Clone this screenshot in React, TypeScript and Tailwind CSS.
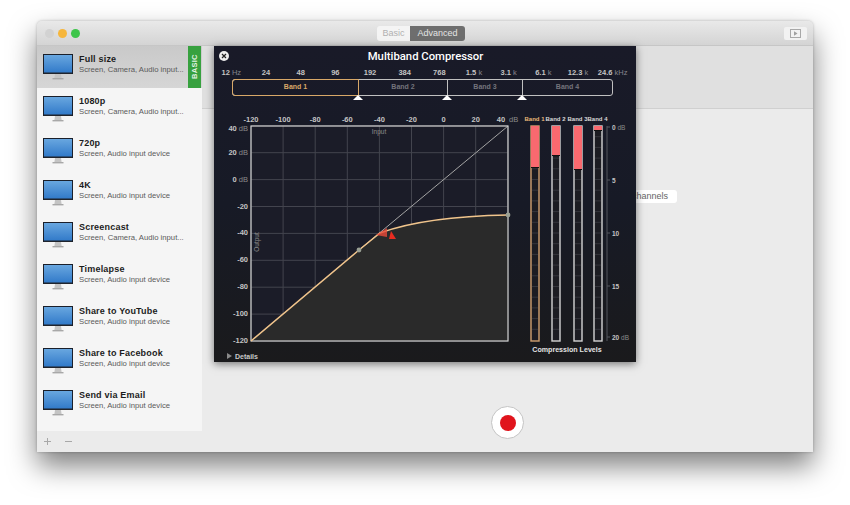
const PRESETS = [
  { name: 'Full size', sub: 'Screen, Camera, Audio input...', selected: true },
  { name: '1080p', sub: 'Screen, Camera, Audio input...' },
  { name: '720p', sub: 'Screen, Audio input device' },
  { name: '4K', sub: 'Screen, Audio input device' },
  { name: 'Screencast', sub: 'Screen, Camera, Audio input...' },
  { name: 'Timelapse', sub: 'Screen, Audio input device' },
  { name: 'Share to YouTube', sub: 'Screen, Audio input device' },
  { name: 'Share to Facebook', sub: 'Screen, Audio input device' },
  { name: 'Send via Email', sub: 'Screen, Audio input device' },
];

const FREQS = [
  ['12', 'Hz'], ['24', ''], ['48', ''], ['96', ''], ['192', ''], ['384', ''],
  ['768', ''], ['1.5', 'k'], ['3.1', 'k'], ['6.1', 'k'], ['12.3', 'k'], ['24.6', 'kHz'],
];

const BANDS = [
  { name: 'Band 1', width: 'w-[127px]', active: true, handle: true },
  { name: 'Band 2', width: 'w-[89px]', handle: true },
  { name: 'Band 3', width: 'w-[75px]', handle: true },
  { name: 'Band 4', width: 'w-[89px]' },
];

const X_TICKS = [-120, -100, -80, -60, -40, -20, 0, 20, 40];
const METERS = [
  { x: 531, top: 167, label: 'Band 1', color: '#d0a070', text: '#e8b878' },
  { x: 552, top: 155, label: 'Band 2', color: '#d4d4d4', text: '#d8d8d8' },
  { x: 574, top: 169, label: 'Band 3', color: '#d4d4d4', text: '#d8d8d8' },
  { x: 594, top: 130, label: 'Band 4', color: '#d4d4d4', text: '#d8d8d8' },
];
const METER_SCALE = [
  { y: 129, value: '0', unit: 'dB' },
  { y: 182, value: '5' },
  { y: 235, value: '10' },
  { y: 288, value: '15' },
  { y: 339, value: '20', unit: 'dB' },
];
const METER_MARKS = Array.from({ length: 19 }, (_, i) => 136.7 + i * 10.7);

function Monitor() {
  return (
    <svg width="31" height="26" viewBox="0 0 31 26" className="shrink-0">
      <defs>
        <linearGradient id="screen" x1="0" y1="0" x2="0" y2="1">
          <stop offset="0" stopColor="#6aa8e0" />
          <stop offset="1" stopColor="#2f78c8" />
        </linearGradient>
      </defs>
      <rect x="0.5" y="0.5" width="29" height="19" fill="url(#screen)" stroke="#1a1f2a" />
      <rect x="1" y="18.5" width="28" height="1.5" fill="#20242c" />
      <path d="M12 20h6l.6 4h-7.2z" fill="#c4c4c4" />
      <rect x="9.5" y="24" width="11" height="1.4" fill="#a8a8a8" />
    </svg>
  );
}

function ChartAndMeters() {
  const yTicks = X_TICKS.slice().reverse();
  return (
    <svg width="422" height="252" viewBox="214 110 422 252" fontFamily="'Liberation Sans', sans-serif" fontWeight="700">
      {/* plot */}
      <rect x="251" y="126" width="257" height="215" fill="#1b1c28" />
      {X_TICKS.map((t, i) => (
        <g key={t}>
          <line x1={251 + i * 32.1} y1="126" x2={251 + i * 32.1} y2="341" stroke="#43444e" strokeWidth="1" />
          <line x1="251" y1={341 - i * 26.9} x2="508" y2={341 - i * 26.9} stroke="#43444e" strokeWidth="1" />
          <text x={t === 40 ? 501 : 251 + i * 32.1} y="122" fontSize="7.5" fill="#c4c4c4" textAnchor="middle">{t}</text>
        </g>
      ))}
      {yTicks.map((t, i) => (
        <text key={t} x="248" y={i === 0 ? 131 : 155 + (i - 1) * 26.8} fontSize="7.5" fill="#c4c4c4" textAnchor="end">
          {t}
          {t >= 0 ? <tspan fill="#8a8a8a" fontWeight="400"> dB</tspan> : null}
        </text>
      ))}
      <text x="509" y="122" fontSize="7.5" fill="#8a8a8a" fontWeight="400">dB</text>
      <path d="M251 341 L359 250 L380 233 C 410 222, 450 216, 508 215 L508 341 Z" fill="#2a2a2a" />
      <line x1="359" y1="250" x2="508" y2="126" stroke="#a4a4a4" strokeWidth="1" />
      <rect x="251" y="126" width="257" height="215" fill="none" stroke="#d0d0d0" strokeWidth="1.2" />
      <path d="M251 341 L359 250 L380 233 C 410 222, 450 216, 508 215" fill="none" stroke="#f0c48c" strokeWidth="1.5" />
      <path d="M376 235 L387 228 L387 237 Z" fill="#ea4a3a" opacity="0.8" />
      <path d="M391 231 L396 239 L389 239 Z" fill="#e82c20" />
      <circle cx="359" cy="250" r="2.4" fill="#9aa094" />
      <circle cx="508" cy="215" r="2.4" fill="#9aa094" />
      <text x="379" y="134" fontSize="6.5" fill="#8c8c8c" textAnchor="middle" fontWeight="400">Input</text>
      <text x="259" y="242" fontSize="6.5" fill="#8c8c8c" textAnchor="middle" fontWeight="400" transform="rotate(-90 259 242)">Output</text>

      {/* meters */}
      {METERS.map((m) => (
        <g key={m.label}>
          <text x={m.x + 3.5} y="121" fontSize="6" fill={m.text} textAnchor="middle">{m.label}</text>
          <rect x={m.x} y="126" width="8" height="215" fill="#1c1c22" stroke={m.color} strokeWidth="1.4" />
          {METER_MARKS.map((y) => (
            <line key={y} x1={m.x + 1} y1={y} x2={m.x + 7} y2={y} stroke="#35353c" strokeWidth="1" />
          ))}
          <rect x={m.x} y="126" width="8" height={m.top - 126} fill="#f9696f" />
          <line x1={m.x} y1={m.top + 0.5} x2={m.x + 8} y2={m.top + 0.5} stroke="#111" strokeWidth="1" />
        </g>
      ))}
      <line x1="607" y1="126" x2="607" y2="341" stroke="#55565e" strokeWidth="1" />
      {METER_SCALE.map((s) => (
        <g key={s.value}>
          <line x1="607" y1={s.y - 2} x2="610" y2={s.y - 2} stroke="#55565e" strokeWidth="1" />
          <text x="612" y={s.y + 1} fontSize="6.5" fill="#c4c4c4">
            {s.value}
            {s.unit ? <tspan fill="#8a8a8a" fontWeight="400"> {s.unit}</tspan> : null}
          </text>
        </g>
      ))}
      <text x="567" y="352" fontSize="7.1" fill="#e4e4e4" textAnchor="middle">Compression Levels</text>
      <path d="M227 353 L232 356 L227 359 Z" fill="#8a8a8a" />
      <text x="235" y="359" fontSize="7" fill="#c8c8c8">Details</text>
    </svg>
  );
}

function CompressorPanel() {
  return (
    <div className="absolute left-[177px] top-[25px] flex h-[316px] w-[422px] flex-col overflow-hidden bg-gradient-to-b from-[#191a28] via-[#171a26] to-[#1a1a1c] shadow-[0_2px_8px_rgba(0,0,0,0.5)]">
      <div className="relative flex h-[22px] items-center justify-center pt-[1px] pl-[1px] font-['Roboto',sans-serif] text-[11.3px] font-medium text-white">
        Multiband Compressor
        <span className="absolute left-[5px] top-[5px] flex h-[10px] w-[10px] items-center justify-center rounded-full bg-[#eeeeee]">
          <svg width="6" height="6" viewBox="0 0 6 6">
            <path d="M1 1l4 4M5 1l-4 4" stroke="#222" strokeWidth="1.2" />
          </svg>
        </span>
      </div>
      <div className="grid h-[10px] w-[416px] grid-cols-12 items-center text-center text-[7.5px] leading-none font-bold text-[#c4c4c4]">
        {FREQS.map(([value, unit]) => (
          <span key={value} className="whitespace-nowrap">
            {value}
            {unit ? <span className="font-normal text-[#85858d]"> {unit}</span> : null}
          </span>
        ))}
      </div>
      <div className="mt-[1px] ml-[18px] flex h-[17px] w-[381px] rounded-[3px] border border-[#c0c0c0]">
        {BANDS.map((band) => (
          <div
            key={band.name}
            className={`relative flex shrink-0 items-center justify-center text-[7px] font-bold ${band.width} ${
              band.active
                ? '-my-px -ml-px h-[17px] rounded-l-[3px] border-[1.5px] border-[#d8a868] text-[#d8a868]'
                : 'text-[#74747c]'
            } ${band.handle && !band.active ? 'border-r border-[#c0c0c0]' : ''}`}
          >
            {band.name}
            {band.handle ? (
              <span className="absolute top-[15px] -right-[5px] h-0 w-0 border-x-[5px] border-b-[5px] border-x-transparent border-b-white" />
            ) : null}
          </div>
        ))}
      </div>
      <div className="mt-[14px]">
        <ChartAndMeters />
      </div>
    </div>
  );
}

export default function App() {
  return (
    <div className="h-[505px] w-[850px] overflow-hidden bg-white pt-[21px] pl-[37px] font-['Liberation_Sans',sans-serif]">
      <div className="relative flex h-[431px] w-[776px] flex-col overflow-hidden rounded-t-[5px] bg-[#ebebeb] shadow-[0_14px_28px_rgba(0,0,0,0.5),0_0_3px_rgba(0,0,0,0.25)]">
        {/* title bar */}
        <div className="relative flex h-[25px] shrink-0 items-center justify-center border-b border-[#c6c6c6] bg-gradient-to-b from-[#e9e9e9] to-[#d4d4d4]">
          <div className="absolute top-[8px] left-[8px] flex gap-[4px]">
            <span className="h-[9px] w-[9px] rounded-full bg-[#d2d2d2]" />
            <span className="h-[9px] w-[9px] rounded-full bg-[#f6b63c]" />
            <span className="h-[9px] w-[9px] rounded-full bg-[#3dc54a]" />
          </div>
          <div className="mr-[8px] flex h-[15px] text-[9px] leading-[15px]">
            <span className="w-[33px] rounded-l-[3px] bg-[#f4f4f4] text-center text-[#b0b0b0]">Basic</span>
            <span className="w-[55px] rounded-r-[3px] bg-[#6e6e6e] text-center text-[#e4e4e4]">Advanced</span>
          </div>
          <div className="absolute top-[6px] right-[6px] flex h-[13px] w-[23px] items-center justify-center rounded-[2px] bg-[#f2f2f2]">
            <svg width="11" height="9" viewBox="0 0 11 9">
              <rect x="0.5" y="0.5" width="10" height="8" fill="none" stroke="#a8a8a8" />
              <path d="M4 2.2L7.5 4.5L4 6.8Z" fill="#a0a0a0" />
            </svg>
          </div>
        </div>

        <div className="flex min-h-0 flex-1">
          {/* presets */}
          <div className="flex w-[165px] shrink-0 flex-col bg-[#f5f5f5]">
            <div className="flex-1">
              {PRESETS.map((p) => (
                <div
                  key={p.name}
                  className={`relative flex h-[42px] items-center gap-[5px] pb-[1px] pl-[6px] ${
                    p.selected ? 'bg-gradient-to-b from-[#c9c9c9] to-[#d6d6d6]' : ''
                  }`}
                >
                  <Monitor />
                  <div className="-mt-[6px] min-w-0">
                    <div className="text-[9px] leading-[12px] font-bold tracking-[0.2px] text-[#1c1c1c]">{p.name}</div>
                    <div className="text-[7.7px] leading-[10px] whitespace-nowrap text-[#5a5a5a]">{p.sub}</div>
                  </div>
                  {p.selected ? (
                    <div className="absolute top-0 right-[1px] flex h-[42px] w-[13px] items-center justify-center bg-[#37a13f]">
                      <span className="-rotate-90 text-[7.5px] font-bold tracking-[0.3px] text-[#e6f3e6]">BASIC</span>
                    </div>
                  ) : null}
                </div>
              ))}
            </div>
            <div className="flex h-[21px] shrink-0 items-center gap-[12px] bg-[#ebebeb] pl-[6px] text-[#a8a8a8]">
              <svg width="9" height="9" viewBox="0 0 9 9">
                <path d="M4.5 1v7M1 4.5h7" stroke="currentColor" strokeWidth="1" />
              </svg>
              <svg width="9" height="9" viewBox="0 0 9 9">
                <path d="M1 4.5h7" stroke="currentColor" strokeWidth="1" />
              </svg>
            </div>
          </div>

          {/* main area */}
          <div className="flex flex-1 flex-col">
            <div className="h-[63px] shrink-0 border-b border-[#d0d0d0] bg-[#e0e0e0]" />
            <div className="flex flex-1 flex-col items-center">
              <div className="mt-[81px] ml-[417px] flex h-[13px] w-[58px] items-center justify-end self-start rounded-[3px] bg-white pr-[9px] text-[9px] text-[#666]">
                channels
              </div>
              <div className="mt-[203px] flex h-[33px] w-[33px] items-center justify-center rounded-full border border-[#c4c4c4] bg-white">
                <span className="h-[16px] w-[16px] rounded-full bg-[#e0141c]" />
              </div>
            </div>
          </div>
        </div>

        <CompressorPanel />
      </div>
    </div>
  );
}
